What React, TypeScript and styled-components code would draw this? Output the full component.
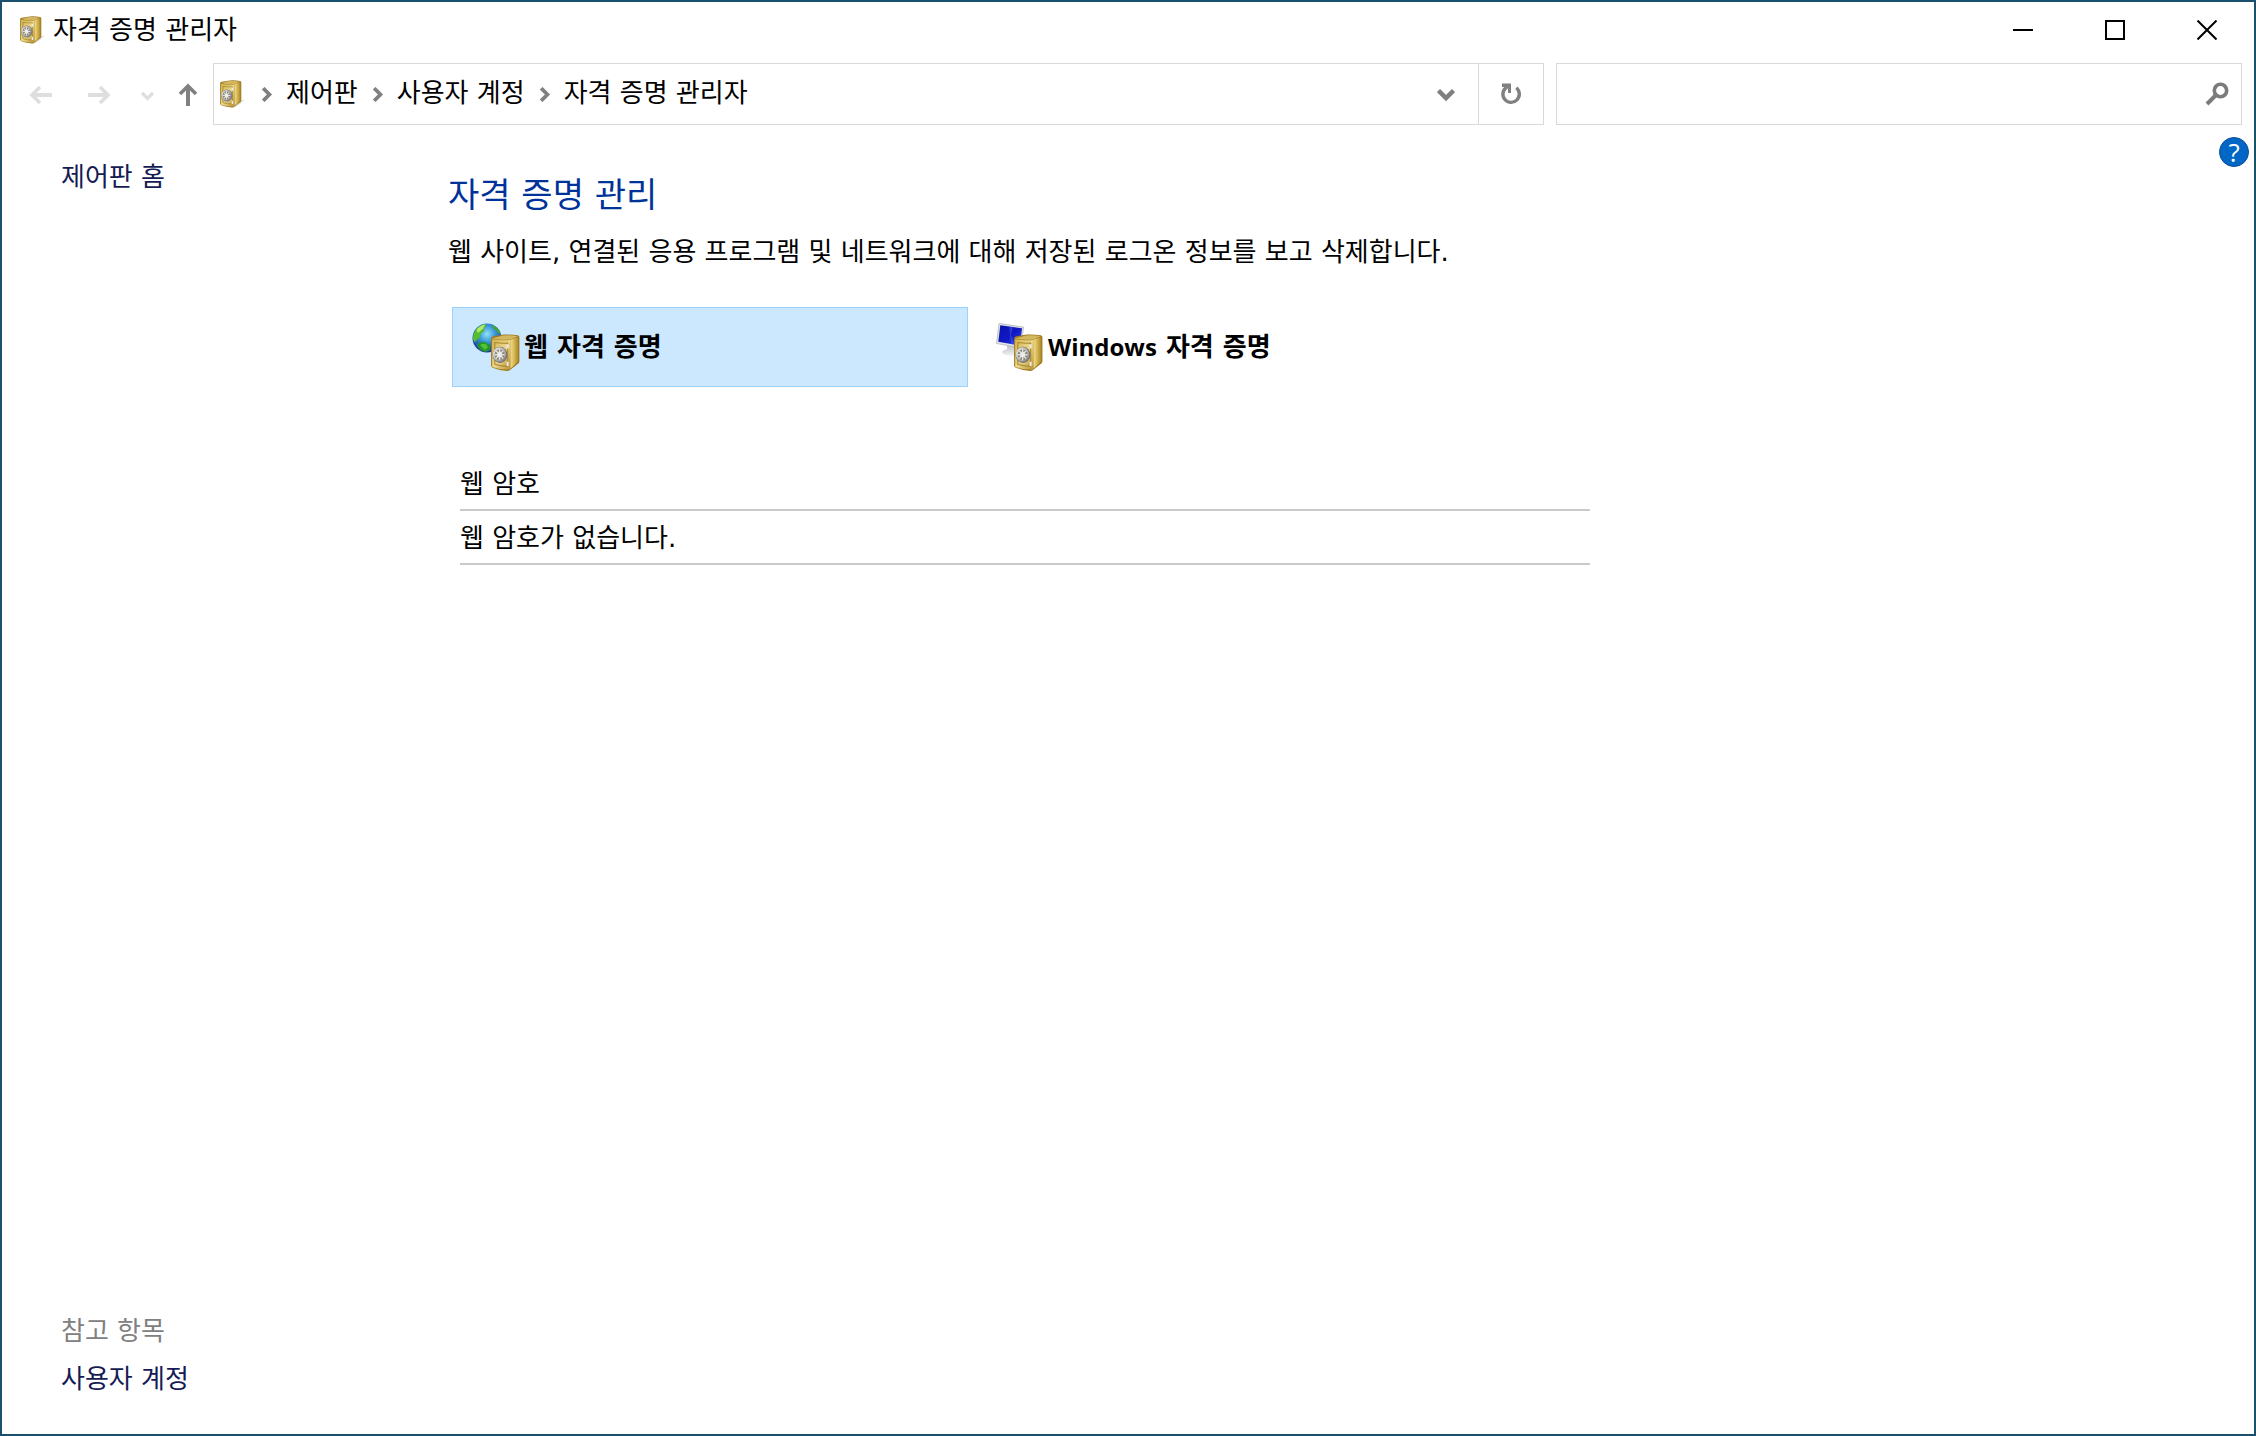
import React from "react";
import styled, { createGlobalStyle } from "styled-components";

const GlobalStyle = createGlobalStyle`
  *, *::before, *::after { box-sizing: border-box; }
  html, body, #root { height: 100%; margin: 0; }
  body {
    background: #fff;
    color: #000;
    font-family: "DejaVu Sans", "Noto Sans CJK KR", sans-serif;
    font-size: 26px;
    line-height: 36px;
  }
  h1, h2, p, ul, ol { margin: 0; padding: 0; font-weight: 400; font-size: inherit; }
  ul, ol { list-style: none; }
  button, input {
    font: inherit;
    color: inherit;
    margin: 0;
    padding: 0;
    border: 0;
    background: none;
    outline: none;
  }
  a { text-decoration: none; color: inherit; }
  svg { display: block; flex: none; }
`;

const Window = styled.div`
  display: flex;
  flex-direction: column;
  min-height: 100%;
  border: 2px solid #18506e;
`;

const TitleBar = styled.header`
  display: flex;
  align-items: center;
  height: 55px;
  padding: 0 1px 0 17px;
`;

const WindowTitle = styled.h1`
  flex: 1;
  padding-left: 7px;
`;

const CaptionButton = styled.button`
  display: flex;
  align-items: center;
  justify-content: center;
  width: 92px;
  height: 54px;
`;

const NavBar = styled.nav`
  display: flex;
  align-items: center;
  height: 74px;
  padding: 0 12px 0 20px;
`;

const NavButtons = styled.div`
  display: flex;
  gap: 8px;
  padding-top: 2px;
`;

const NavButton = styled.button<{ $width: number; $muted?: boolean }>`
  display: flex;
  align-items: center;
  justify-content: center;
  width: ${(p) => p.$width}px;
  height: 48px;
  color: ${(p) => (p.$muted ? "#dedede" : "#808080")};
`;

const AddressBar = styled.div`
  display: flex;
  flex: 1324 1 0;
  align-items: center;
  height: 62px;
  margin-left: 1px;
  padding-left: 5px;
  border: 1px solid #d9d9d9;
`;

const Crumbs = styled.ol`
  display: flex;
  flex: 1;
  align-items: center;
  padding-left: 13px;
`;

const Crumb = styled.li`
  display: flex;
  align-items: center;
  color: #808080;

  a {
    padding: 0 12px 2px;
    color: #000;
  }
`;

const BarButton = styled.button<{ $divided?: boolean }>`
  display: flex;
  align-items: center;
  justify-content: center;
  width: 65px;
  height: 60px;
  color: #808080;
  border-left: ${(p) => (p.$divided ? "1px solid #d9d9d9" : "0")};
`;

const SearchBox = styled.form`
  display: flex;
  flex: 676 1 0;
  align-items: center;
  height: 62px;
  margin-left: 12px;
  padding-right: 8px;
  border: 1px solid #d9d9d9;

  input {
    flex: 1;
    min-width: 0;
    height: 60px;
    padding-left: 12px;
  }
`;

const SearchButton = styled.button`
  display: flex;
  padding: 4px;
  color: #7b7b7b;
`;

const Body = styled.div`
  display: flex;
  flex: 1;
`;

const Sidebar = styled.aside`
  display: flex;
  flex: none;
  flex-direction: column;
  justify-content: space-between;
  width: 388px;
  padding: 28px 0 37px 59px;
`;

const SidebarGroup = styled.div`
  display: flex;
  flex-direction: column;
  align-items: flex-start;
  gap: 12px;
`;

const SidebarLink = styled.a`
  color: #151c55;
`;

const SidebarLabel = styled.h2`
  color: #808080;
`;

const Main = styled.main`
  flex: 1;
  padding: 40px 0 0 58px;
`;

const PageHeading = styled.h2`
  && {
    font-size: 34px;
    line-height: 48px;
    color: #003399;
  }
`;

const Description = styled.p`
  padding-top: 15px;
`;

const Tiles = styled.div`
  display: flex;
  gap: 8px;
  padding: 37px 0 0 4px;
`;

const Tile = styled.button<{ $selected?: boolean }>`
  && {
    display: flex;
    align-items: center;
    gap: 4px;
    width: 516px;
    height: 80px;
    padding: 0 19px;
    font-weight: 700;
    border: 1px solid ${(p) => (p.$selected ? "#99d1ff" : "transparent")};
    background: ${(p) => (p.$selected ? "#cce8ff" : "transparent")};
  }
`;

const Latin = styled.span`
  font-family: "Open Sans", "Noto Sans", sans-serif;
  font-size: 24px;
`;

const Vault = styled.section`
  width: 1130px;
  margin: 70px 0 0 12px;
`;

const vaultRow = `
  height: 54px;
  padding-top: 9px;
  border-bottom: 2px solid #cacaca;
`;

const VaultTitle = styled.h2`
  && { ${vaultRow} }
`;

const VaultEmpty = styled.p`
  && { ${vaultRow} }
`;

const HelpColumn = styled.div`
  flex: none;
  padding: 6px 5px 0 0;
`;

const HelpButton = styled.button`
  && {
    display: flex;
    align-items: center;
    justify-content: center;
    width: 30px;
    height: 30px;
    border: 1px solid #0b4f94;
    border-radius: 50%;
    background: #0067c7;
    color: #fff;
    font-family: "Open Sans", "Noto Sans", sans-serif;
    font-size: 26px;
    line-height: 28px;
  }
`;

function SafeShape({ id }: { id: string }) {
  return (
    <g>
      <defs>
        <linearGradient id={`${id}-front`} x1="0" y1="0" x2="1" y2="1">
          <stop offset="0" stopColor="#d2b44f" />
          <stop offset="0.5" stopColor="#ecd78a" />
          <stop offset="1" stopColor="#b8923a" />
        </linearGradient>
        <linearGradient id={`${id}-side`} x1="0" y1="0" x2="1" y2="0">
          <stop offset="0" stopColor="#f3df92" />
          <stop offset="0.45" stopColor="#d8b954" />
          <stop offset="1" stopColor="#a8862a" />
        </linearGradient>
        <linearGradient id={`${id}-dial`} x1="0" y1="0" x2="1" y2="1">
          <stop offset="0" stopColor="#f4f4f4" />
          <stop offset="1" stopColor="#7d7d82" />
        </linearGradient>
      </defs>
      <path d="M1 4.500Q1 2.600 3 2.200L13 .5Q20 .2 26 1.200 27.500 1.500 27.500 3v22.500q0 1.300-1 2L19 33.500Q18 34.600 16 34.500 8 34 2.500 31.500 1 31 1 29.500Z" fill="#a07c22" />
      <path d="M2 4.200 12 1.400q8-.8 14 .8L19 5.200Q9 6 2 4.200Z" fill="#d3b660" />
      <path d="M19 5.400 26.600 2.800v22.700L19 32.500Z" fill={`url(#${id}-side)`} />
      <path d="M2 5q8 1.200 17 .6v27.600q-9 .5-17-2.400Z" fill={`url(#${id}-front)`} />
      <path d="M4.500 8q6 .8 12 .5v21.500q-6 .2-12-1.800Z" fill="none" stroke="#a8852f" strokeWidth="1" />
      <path d="M16.500 9.500v4M16.500 26v4" stroke="#ececec" strokeWidth="1.800" />
      <ellipse cx="9.300" cy="19.500" rx="7" ry="7.500" fill="#77736a" />
      <ellipse cx="8.900" cy="19.200" rx="6.300" ry="6.800" fill={`url(#${id}-dial)`} />
      <ellipse cx="9" cy="19.300" rx="4.600" ry="5.100" fill="#8b8570" />
      <path d="M9 14v10.600M4.300 19.300h9.400M5.700 15.700l6.600 7.200M12.300 15.700l-6.600 7.200" stroke="#e0e0e0" strokeWidth="1.400" />
      <ellipse cx="9" cy="19.300" rx="2.200" ry="2.400" fill="#ececec" />
    </g>
  );
}

function SafeIcon({ id }: { id: string }) {
  return (
    <svg width="27" height="28" viewBox="0 0 33 35" aria-hidden="true">
      <path d="M27 26l5-2-6 6-7 4Z" fill="#000" opacity="0.12" />
      <SafeShape id={id} />
    </svg>
  );
}

function WebVaultIcon() {
  return (
    <svg width="48" height="48" viewBox="0 0 48 48" aria-hidden="true">
      <defs>
        <radialGradient id="ocean" cx="0.5" cy="0.36" r="0.62">
          <stop offset="0" stopColor="#8fe3f8" />
          <stop offset="0.45" stopColor="#3b97d8" />
          <stop offset="1" stopColor="#1a36a0" />
        </radialGradient>
      </defs>
      <circle cx="15" cy="15" r="14.500" fill="url(#ocean)" />
      <path d="M1.500 11Q4.500 3 13 1l1 2-3 3 2 2-4 2-1 4-4 4-2 1q-2-4-.5-8Z" fill="#55bd2e" />
      <path d="M4.500 7q4-5 8.500-5.500l-2 4-5 4.500Z" fill="#b6e867" />
      <path d="M20 1.800q6 2 8.500 8l-2 1-2-3-3-2Z" fill="#3ea636" />
      <path d="M5 22q3-4 8-3l5 3v5l-4 2q-7-1-9-7Z" fill="#25962f" />
      <path d="M8 22q3-2 6-1l2 3-3 3Z" fill="#52c235" />
      <g transform="translate(18 11) scale(1.07)"><SafeShape id="web-safe" /></g>
    </svg>
  );
}

function WindowsVaultIcon() {
  return (
    <svg width="48" height="48" viewBox="0 0 48 48" aria-hidden="true">
      <defs>
        <linearGradient id="screen" x1="0" y1="0" x2="1" y2="1">
          <stop offset="0" stopColor="#0a12a6" />
          <stop offset="0.5" stopColor="#1018c4" />
          <stop offset="1" stopColor="#2a3fdc" />
        </linearGradient>
        <linearGradient id="stand" x1="0" y1="0" x2="0" y2="1">
          <stop offset="0" stopColor="#b9bcc2" />
          <stop offset="1" stopColor="#f1f1f3" />
        </linearGradient>
      </defs>
      <path d="M11 21h8v5h4v6q-9 2-16-1-3-3 4-5Z" fill="url(#stand)" />
      <path d="M3 .5 27.500 4 25 25 .5 20.500Z" fill="#dfe2e6" stroke="#b5b9bf" strokeWidth="0.800" />
      <path d="M4.300 2.300 26 5.300 24 22.500 2.300 18.800Z" fill="url(#screen)" />
      <path d="M13 3.600 17 4.100 15 12 19 21.600 15 21Z" fill="#4c62ee" opacity="0.45" />
      <g transform="translate(17 11) scale(1.07)"><SafeShape id="win-safe" /></g>
    </svg>
  );
}

function ArrowIcon({ angle }: { angle: number }) {
  return (
    <svg width="24" height="24" viewBox="0 0 24 24" aria-hidden="true">
      <g transform={`rotate(${angle} 12 12)`} fill="none" stroke="currentColor" strokeWidth="4">
        <path d="M23 12H4" />
        <path d="M11 4 3 12l8 8" strokeWidth="3.600" />
      </g>
    </svg>
  );
}

function ChevronIcon({ size, down }: { size: number; down?: boolean }) {
  return (
    <svg width={size} height={size} viewBox="0 0 18 18" aria-hidden="true">
      <path
        d={down ? "M1.500 5.500 9 13l7.500-7.500" : "M5 1.500 12.500 9 5 16.500"}
        fill="none"
        stroke="currentColor"
        strokeWidth="4.500"
      />
    </svg>
  );
}

function RefreshIcon() {
  return (
    <svg width="22" height="22" viewBox="0 0 22 22" aria-hidden="true">
      <path d="M16.300 4.800A8.200 8.200 0 1 1 6.300 4.500" fill="none" stroke="currentColor" strokeWidth="3.400" />
      <path d="M2 .5h9v9.500H8V6L5 4H2Z" fill="currentColor" />
    </svg>
  );
}

function SearchIcon() {
  return (
    <svg width="24" height="24" viewBox="0 0 24 24" aria-hidden="true">
      <circle cx="15.500" cy="8.500" r="6.200" fill="none" stroke="currentColor" strokeWidth="3.600" />
      <path d="M11.500 12.500 2 22" stroke="currentColor" strokeWidth="4" />
    </svg>
  );
}

function CaptionIcon({ path }: { path: string }) {
  return (
    <svg width="20" height="20" viewBox="0 0 20 20" aria-hidden="true">
      <path d={path} fill="none" stroke="#000" strokeWidth="2" />
    </svg>
  );
}

const captionButtons = [
  { label: "최소화", path: "M0 10h20" },
  { label: "최대화", path: "M1 1h18v18H1Z" },
  { label: "닫기", path: "M.5.5l19 19M19.500.5l-19 19" },
];

const crumbs = ["제어판", "사용자 계정", "자격 증명 관리자"];

export default function App() {
  return (
    <>
      <GlobalStyle />
      <Window>
        <TitleBar>
          <SafeIcon id="title-safe" />
          <WindowTitle>자격 증명 관리자</WindowTitle>
          {captionButtons.map((b) => (
            <CaptionButton key={b.label} type="button" aria-label={b.label}>
              <CaptionIcon path={b.path} />
            </CaptionButton>
          ))}
        </TitleBar>

        <NavBar aria-label="탐색">
          <NavButtons>
            <NavButton type="button" aria-label="뒤로" $width={38} $muted>
              <ArrowIcon angle={0} />
            </NavButton>
            <NavButton type="button" aria-label="앞으로" $width={62} $muted>
              <ArrowIcon angle={180} />
            </NavButton>
            <NavButton type="button" aria-label="최근 위치" $width={18} $muted>
              <ChevronIcon size={13} down />
            </NavButton>
            <NavButton type="button" aria-label="위로" $width={48}>
              <ArrowIcon angle={90} />
            </NavButton>
          </NavButtons>
          <AddressBar>
            <SafeIcon id="address-safe" />
            <Crumbs>
              {crumbs.map((c) => (
                <Crumb key={c}>
                  <ChevronIcon size={15} />
                  <a href="#">{c}</a>
                </Crumb>
              ))}
            </Crumbs>
            <BarButton type="button" aria-label="이전 위치">
              <ChevronIcon size={18} down />
            </BarButton>
            <BarButton type="button" aria-label="새로 고침" $divided>
              <RefreshIcon />
            </BarButton>
          </AddressBar>
          <SearchBox role="search" onSubmit={(e) => e.preventDefault()}>
            <input type="text" aria-label="제어판 검색" />
            <SearchButton type="submit" aria-label="검색">
              <SearchIcon />
            </SearchButton>
          </SearchBox>
        </NavBar>

        <Body>
          <Sidebar>
            <SidebarLink href="#">제어판 홈</SidebarLink>
            <SidebarGroup>
              <SidebarLabel>참고 항목</SidebarLabel>
              <SidebarLink href="#">사용자 계정</SidebarLink>
            </SidebarGroup>
          </Sidebar>
          <Main>
            <PageHeading>자격 증명 관리</PageHeading>
            <Description>
              웹 사이트, 연결된 응용 프로그램 및 네트워크에 대해 저장된 로그온 정보를 보고 삭제합니다.
            </Description>
            <Tiles>
              <Tile type="button" aria-pressed="true" $selected>
                <WebVaultIcon />
                <span>웹 자격 증명</span>
              </Tile>
              <Tile type="button" aria-pressed="false">
                <WindowsVaultIcon />
                <span>
                  <Latin>Windows</Latin> 자격 증명
                </span>
              </Tile>
            </Tiles>
            <Vault>
              <VaultTitle>웹 암호</VaultTitle>
              <VaultEmpty>웹 암호가 없습니다.</VaultEmpty>
            </Vault>
          </Main>
          <HelpColumn>
            <HelpButton type="button" aria-label="도움말">?</HelpButton>
          </HelpColumn>
        </Body>
      </Window>
    </>
  );
}
